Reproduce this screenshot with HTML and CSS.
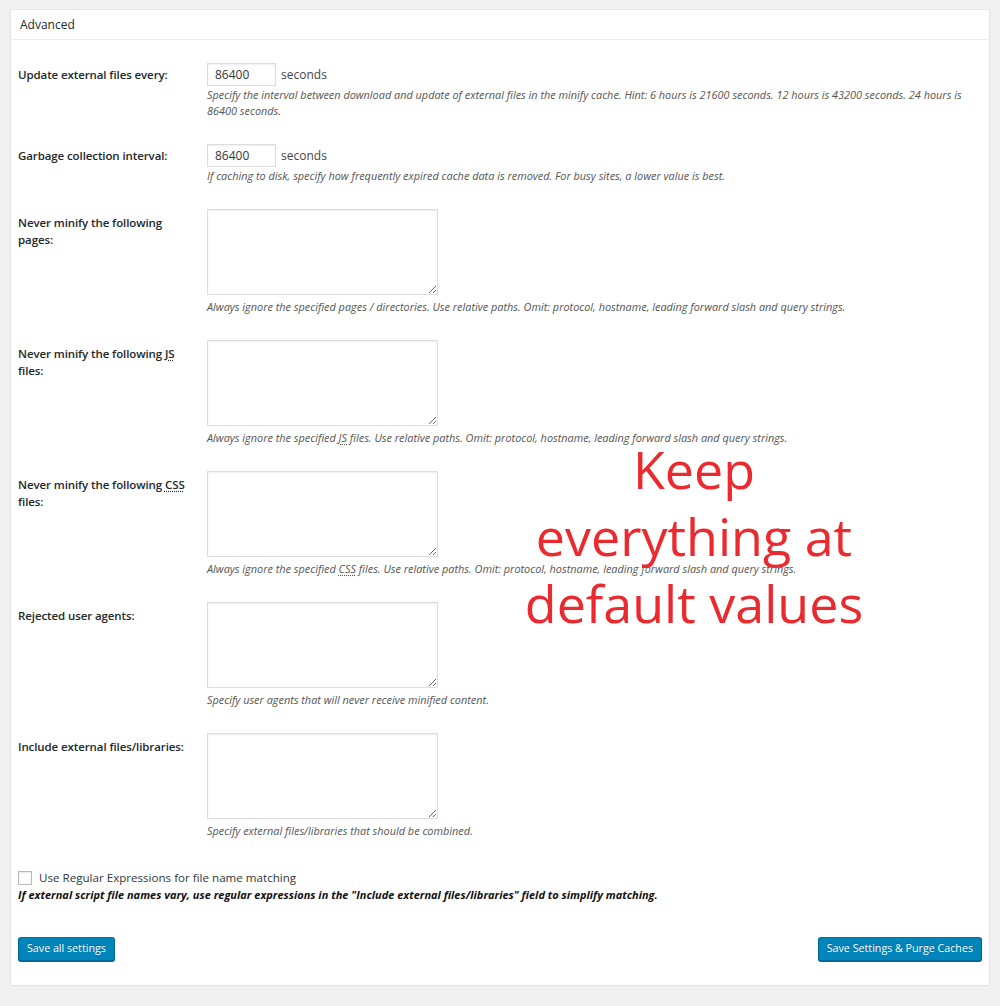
FILE: index.html
```html
<!DOCTYPE html>
<html>
<head>
<meta charset="utf-8">
<link rel="stylesheet" href="styles.css">
</head>
<body>
<div class="panel">
  <h2 class="panel-title">Advanced</h2>
  <div class="panel-body">
    <div class="form">
      <div class="row">
        <div class="label">Update external files every:</div>
        <div class="field">
          <div class="inline"><input class="num" type="text" value="86400"> <span class="unit">seconds</span></div>
          <p class="desc">Specify the interval between download and update of external files in the minify cache. Hint: 6 hours is 21600 seconds. 12 hours is 43200 seconds. 24 hours is 86400 seconds.</p>
        </div>
      </div>
      <div class="row">
        <div class="label">Garbage collection interval:</div>
        <div class="field">
          <div class="inline"><input class="num" type="text" value="86400"> <span class="unit">seconds</span></div>
          <p class="desc">If caching to disk, specify how frequently expired cache data is removed. For busy sites, a lower value is best.</p>
        </div>
      </div>
      <div class="row">
        <div class="label tall">Never minify the following pages:</div>
        <div class="field">
          <textarea class="area"></textarea>
          <p class="desc">Always ignore the specified pages / directories. Use relative paths. Omit: protocol, hostname, leading forward slash and query strings.</p>
        </div>
      </div>
      <div class="row">
        <div class="label tall">Never minify the following <abbr>JS</abbr> files:</div>
        <div class="field">
          <textarea class="area"></textarea>
          <p class="desc">Always ignore the specified <abbr>JS</abbr> files. Use relative paths. Omit: protocol, hostname, leading forward slash and query strings.</p>
        </div>
      </div>
      <div class="row">
        <div class="label tall">Never minify the following <abbr>CSS</abbr> files:</div>
        <div class="field">
          <textarea class="area"></textarea>
          <p class="desc">Always ignore the specified <abbr>CSS</abbr> files. Use relative paths. Omit: protocol, hostname, leading forward slash and query strings.</p>
        </div>
      </div>
      <div class="row">
        <div class="label tall">Rejected user agents:</div>
        <div class="field">
          <textarea class="area"></textarea>
          <p class="desc">Specify user agents that will never receive minified content.</p>
        </div>
      </div>
      <div class="row">
        <div class="label tall">Include external files/libraries:</div>
        <div class="field">
          <textarea class="area"></textarea>
          <p class="desc">Specify external files/libraries that should be combined.</p>
        </div>
      </div>
    </div>
    <div class="check">
      <label class="check-label"><span class="box"></span>Use Regular Expressions for file name matching</label>
      <p class="note">If external script file names vary, use regular expressions in the "Include external files/libraries" field to simplify matching.</p>
    </div>
    <div class="actions">
      <button class="btn">Save all settings</button>
      <button class="btn">Save Settings &amp; Purge Caches</button>
    </div>
  </div>
  <div class="overlay">Keep<br>everything at<br>default values</div>
</div>
</body>
</html>
```
FILE: styles.css
```css
html, body {
  margin: 0;
  padding: 0;
  background: #f1f1f1;
  font-family: "Open Sans", "Noto Sans", sans-serif;
  color: #23282d;
}
.panel {
  position: relative;
  margin: 9px 10px 0 10px;
  width: 978px;
  background: #fff;
  border: 1px solid #e5e5e5;
  box-shadow: 0 1px 1px rgba(0,0,0,.04);
}
.panel-title {
  margin: 0;
  height: 29px;
  padding: 0 0 0 9px;
  font-size: 12px;
  font-weight: 400;
  line-height: 29px;
  border-bottom: 1px solid #eee;
}
.panel-body {
  padding: 11px 7px 24px 7px;
}
.row {
  display: flex;
  padding: 12px 0 13px 0;
}
.label {
  width: 176px;
  flex: none;
  padding-right: 13px;
  padding-top: 3px;
  font-size: 11.5px;
  letter-spacing: -0.1px;
  font-weight: 600;
  line-height: 17px;
  color: #23282d;
}
.label.tall {
  padding-top: 5px;
}
.field {
  flex: 1;
  min-width: 0;
}
.inline {
  display: flex;
  align-items: center;
  height: 23px;
}
.num {
  box-sizing: border-box;
  width: 69px;
  height: 23px;
  margin: 0 5px 0 0;
  padding: 0 7px;
  border: 1px solid #ddd;
  box-shadow: inset 0 1px 2px rgba(0,0,0,.07);
  font-family: inherit;
  font-size: 12px;
  color: #32373c;
  outline: none;
}
.unit {
  font-size: 12px;
  color: #444;
}
.area {
  display: block;
  box-sizing: border-box;
  width: 231px;
  height: 86px;
  margin: 0;
  border: 1px solid #ddd;
  box-shadow: inset 0 1px 2px rgba(0,0,0,.07);
  resize: both;
  outline: none;
}
.desc {
  margin: 1px 0 0 0;
  font-size: 10.9px;
  font-style: italic;
  line-height: 16px;
  color: #555;
}
.area + .desc {
  margin-top: 4px;
}
abbr {
  text-decoration: underline dotted;
  text-underline-offset: 2px;
}
.check {
  padding-top: 18px;
}
.check-label {
  display: flex;
  align-items: center;
  font-size: 11.6px;
  color: #32373c;
  line-height: 16px;
}
.box {
  box-sizing: border-box;
  width: 14px;
  height: 14px;
  margin-right: 7px;
  border: 1px solid #b4b9be;
  background: #fff;
  box-shadow: inset 0 1px 2px rgba(0,0,0,.1);
}
.note {
  margin: 1px 0 0 0;
  font-size: 11px;
  font-weight: 700;
  font-style: italic;
  line-height: 16px;
  color: #111;
}
.actions {
  display: flex;
  justify-content: space-between;
  margin-top: 34px;
}
.btn {
  box-sizing: border-box;
  height: 24px;
  padding: 0 8px 1px;
  border: 1px solid;
  border-color: #0073aa #006799 #006799;
  border-radius: 3px;
  background: #0085ba;
  box-shadow: 0 1px 0 #006799;
  color: #fff;
  font-family: inherit;
  font-size: 10.7px;
  line-height: 21px;
  text-shadow: 0 -1px 1px #006799;
}
.overlay {
  position: absolute;
  left: 493px;
  top: 425px;
  width: 380px;
  text-align: center;
  font-family: "Open Sans", sans-serif;
  font-size: 52px;
  line-height: 67px;
  color: #ea2a2e;
}
```
